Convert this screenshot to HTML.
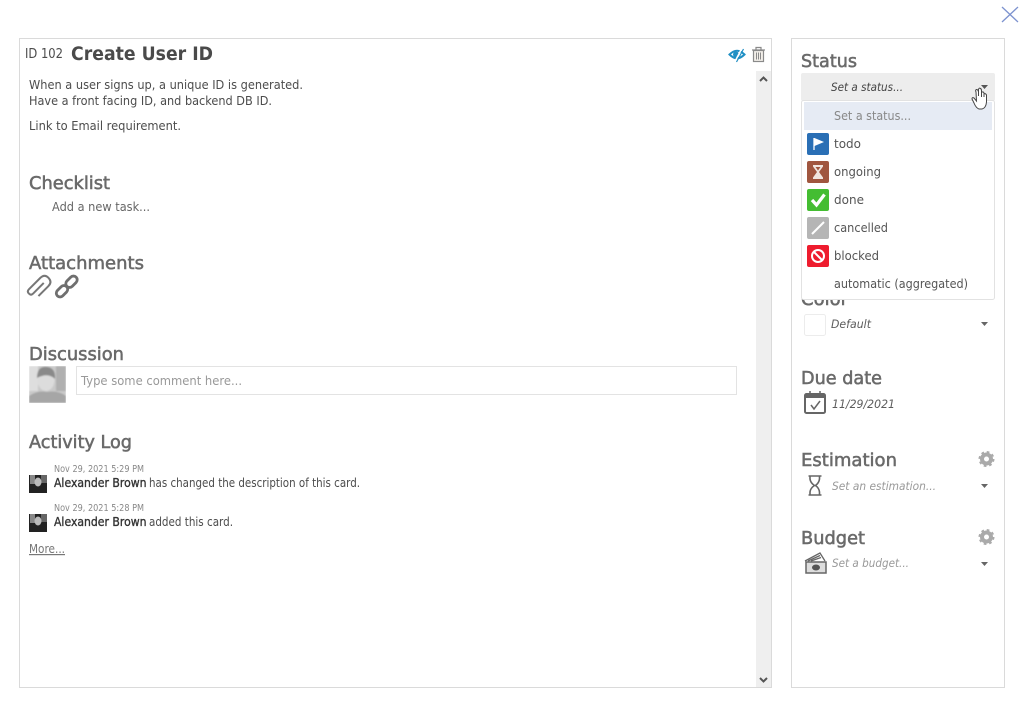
<!DOCTYPE html>
<html><head><meta charset="utf-8"><style>
html,body{margin:0;padding:0;background:#fff;width:1024px;height:707px;overflow:hidden}
svg{display:block}
text{font-family:"DejaVu Sans","Liberation Sans",sans-serif;font-size:12px;fill:#4c4c4c}
.h{font-size:18px;fill:#6a6a6a;stroke:#6a6a6a;stroke-width:.55px}
.i{font-style:italic;fill:#5c5c5c;font-size:11.500px}
.b{stroke:#333;stroke-width:.35px;fill:#333}
.l{font-size:12.500px;fill:#555}
</style></head><body>
<svg width="1024" height="707" viewBox="0 0 1024 707" xmlns="http://www.w3.org/2000/svg">
<defs><filter id="bl" x="0" y="0" width="100%" height="100%"><feGaussianBlur stdDeviation="0.800"/></filter>
<clipPath id="av"><rect x="29" y="366" width="37" height="37"/></clipPath></defs>
<path d="M1002 7L1018 22M1018 7L1002 22" stroke="#7d93cf" stroke-width="1.300" fill="none"/>
<rect x="19.500" y="38.500" width="752" height="649" fill="#fff" stroke="#dadada"/>
<rect x="791.500" y="38.500" width="213" height="649" fill="#fff" stroke="#dadada"/>
<rect x="756" y="71" width="15" height="616" fill="#efefef"/>
<path d="M760 81L763.500 77.500L767 81" stroke="#555" stroke-width="2" fill="none"/>
<path d="M760 678L763.500 681.500L767 678" stroke="#555" stroke-width="2" fill="none"/>

<text x="25" y="58" style="font-size:13px" textLength="38" lengthAdjust="spacingAndGlyphs">ID 102</text>
<text x="71" y="60" style="font-size:18.500px;font-weight:bold;fill:#4a4a4a" textLength="142" lengthAdjust="spacingAndGlyphs">Create User ID</text>
<path d="M729.500 54.500Q737 47 744.500 54.500Q737 62 729.500 54.500Z" fill="#fff" stroke="#1f8fc4" stroke-width="2"/><circle cx="736" cy="54.500" r="3" fill="#1f8fc4"/><path d="M735 61.500L742 48" stroke="#fff" stroke-width="1.500"/><path d="M736.500 62L743.500 49" stroke="#1f8fc4" stroke-width="1.200"/>
<path d="M752 50H765M756 50V47.500H761V50" stroke="#8a8a8a" stroke-width="1.200" fill="none"/><rect x="753.500" y="50.500" width="10" height="11" fill="#f3efe9" stroke="#8a8a8a" stroke-width="1.200"/><path d="M756.500 52.500V59.500M758.500 52.500V59.500M760.500 52.500V59.500" stroke="#8a8a8a" stroke-width="1" fill="none"/>

<text x="29" y="89" textLength="274" lengthAdjust="spacingAndGlyphs">When a user signs up, a unique ID is generated.</text>
<text x="29" y="105" textLength="243" lengthAdjust="spacingAndGlyphs">Have a front facing ID, and backend DB ID.</text>
<text x="29" y="130" textLength="152" lengthAdjust="spacingAndGlyphs">Link to Email requirement.</text>

<text class="h" x="29" y="189" textLength="81" lengthAdjust="spacingAndGlyphs">Checklist</text>
<text x="52" y="211" style="fill:#666" textLength="98" lengthAdjust="spacingAndGlyphs">Add a new task...</text>
<text class="h" x="29" y="269" textLength="115" lengthAdjust="spacingAndGlyphs">Attachments</text>
<g fill="none" stroke="#777" stroke-width="2" transform="rotate(-45 39.500 286.500)"><path d="M32 292.500H46Q52 292.500 52 286.500Q52 281 46 281H30Q27 281 27 284Q27 287 30 287H45"/></g>
<g fill="none" stroke="#6f6f6f" stroke-width="2.800"><rect x="55.500" y="287.500" width="13" height="7.500" rx="3.750" transform="rotate(-45 62 291.250)"/><rect x="65" y="278" width="13" height="7.500" rx="3.750" transform="rotate(-45 71.500 281.750)"/></g>

<text class="h" x="29" y="360" textLength="95" lengthAdjust="spacingAndGlyphs">Discussion</text>
<g clip-path="url(#av)"><g filter="url(#bl)">
<rect x="29" y="366" width="37" height="37" fill="#c9c9c9"/>
<rect x="29" y="366" width="9" height="25" fill="#dedede"/><rect x="56" y="366" width="10" height="25" fill="#b0b0b0"/>
<ellipse cx="46" cy="380" rx="8.500" ry="11" fill="#dcdcdc"/><path d="M37 378Q37 366 47 367Q56 368 55 379Q48 372 37 378Z" fill="#8a8a8a"/><path d="M29 403V396Q38 390 47 392Q58 390 66 396V403Z" fill="#a6a6a6"/>
</g></g>
<rect x="76.500" y="366.500" width="660" height="28" fill="#fff" stroke="#e3e3e3"/>
<text x="81" y="385" style="fill:#999" textLength="161" lengthAdjust="spacingAndGlyphs">Type some comment here...</text>

<text class="h" x="29" y="448" textLength="103" lengthAdjust="spacingAndGlyphs">Activity Log</text>
<text x="54" y="472" style="font-size:10px;fill:#888" textLength="90" lengthAdjust="spacingAndGlyphs">Nov 29, 2021 5:29 PM</text>
<rect x="29" y="475" width="18" height="18" fill="#222"/><rect x="30" y="475" width="5" height="9" fill="#888"/><rect x="41" y="475" width="6" height="8" fill="#666"/><ellipse cx="38" cy="482" rx="3.500" ry="4.500" fill="#bbb"/>
<text x="54" y="487" class="b" textLength="92.500" lengthAdjust="spacingAndGlyphs">Alexander Brown</text>
<text x="149" y="487" textLength="211" lengthAdjust="spacingAndGlyphs">has changed the description of this card.</text>
<text x="54" y="511" style="font-size:10px;fill:#888" textLength="90" lengthAdjust="spacingAndGlyphs">Nov 29, 2021 5:28 PM</text>
<rect x="29" y="514" width="18" height="18" fill="#222"/><rect x="30" y="514" width="5" height="9" fill="#888"/><rect x="41" y="514" width="6" height="8" fill="#666"/><ellipse cx="38" cy="521" rx="3.500" ry="4.500" fill="#bbb"/>
<text x="54" y="526" class="b" textLength="92.500" lengthAdjust="spacingAndGlyphs">Alexander Brown</text>
<text x="149" y="526" textLength="84" lengthAdjust="spacingAndGlyphs">added this card.</text>
<text x="29" y="553" style="fill:#777;text-decoration:underline" textLength="36" lengthAdjust="spacingAndGlyphs">More...</text>

<text class="h" x="801" y="67" textLength="56" lengthAdjust="spacingAndGlyphs">Status</text>
<rect x="801" y="73" width="194" height="28" rx="2" fill="#ededed"/>
<text x="831" y="91" class="i" style="fill:#444" textLength="72" lengthAdjust="spacingAndGlyphs">Set a status...</text>
<path d="M981 85H988L984.500 89Z" fill="#555"/>

<text class="h" x="801" y="305" textLength="47" lengthAdjust="spacingAndGlyphs">Color</text>
<rect x="801.500" y="100.500" width="193" height="199" rx="2" fill="#fff" stroke="#e2e2e2"/>
<rect x="804" y="102" width="188" height="28" fill="#e6ebf4"/>
<text x="834" y="120" style="fill:#888" textLength="77" lengthAdjust="spacingAndGlyphs">Set a status...</text>

<rect x="807" y="133" width="22" height="22" rx="2" fill="#2a6fb5"/><path d="M814 138V150" stroke="#fff" stroke-width="1.300"/><path d="M814.500 138L824 142L814.500 146Z" fill="#fff"/>
<text x="834" y="148" class="l" textLength="27" lengthAdjust="spacingAndGlyphs">todo</text>
<rect x="807" y="161" width="22" height="22" rx="2" fill="#a0563f"/><path d="M813 165H823V166.500L819 172L823 177.500V179H813V177.500L817 172L813 166.500Z" fill="#f0e6e0"/><path d="M815.500 167H820.500L818 170.500Z" fill="#a0563f"/>
<text x="834" y="176" class="l" textLength="47" lengthAdjust="spacingAndGlyphs">ongoing</text>
<rect x="807" y="189" width="22" height="22" rx="2" fill="#44bd32"/><path d="M812 200L816.500 205L824.500 194.500" stroke="#fff" stroke-width="3.200" fill="none"/>
<text x="834" y="204" class="l" textLength="30" lengthAdjust="spacingAndGlyphs">done</text>
<rect x="807" y="217" width="22" height="22" rx="2" fill="#b5b5b5"/><path d="M812 234L824 222" stroke="#fff" stroke-width="2"/>
<text x="834" y="232" class="l" textLength="54" lengthAdjust="spacingAndGlyphs">cancelled</text>
<rect x="807" y="245" width="22" height="22" rx="2" fill="#ee1c2e"/><circle cx="818" cy="256" r="6" fill="none" stroke="#fff" stroke-width="2"/><path d="M814 252L822 260" stroke="#fff" stroke-width="2"/>
<text x="834" y="260" class="l" textLength="45" lengthAdjust="spacingAndGlyphs">blocked</text>
<text x="834" y="288" class="l" textLength="134" lengthAdjust="spacingAndGlyphs">automatic (aggregated)</text>

<path d="M976 92Q975 90 976.500 89.500Q978 89.500 978.500 92V96V89.500Q979 87.500 980.500 88.500Q981.500 89 981.500 91V97V92.500Q983 91 984 93V97V94Q985.500 93 986.500 95V102Q986 108 982 109H979Q976 108 974 103L972 99Q972 97 974 98L976.500 101Z" fill="#fff" stroke="#444" stroke-width="1"/>

<rect x="804.500" y="314.500" width="21" height="21" rx="2" fill="#fff" stroke="#ececec"/>
<text x="831" y="328" class="i" textLength="40" lengthAdjust="spacingAndGlyphs">Default</text>
<path d="M981 322H988L984.500 326Z" fill="#666"/>

<text class="h" x="801" y="384" textLength="81" lengthAdjust="spacingAndGlyphs">Due date</text>
<rect x="805" y="394" width="20" height="19" rx="1.500" fill="#fff" stroke="#666" stroke-width="2"/><rect x="805" y="394" width="20" height="4" fill="#666"/><path d="M810 391V396M820 391V396" stroke="#666" stroke-width="1.500"/><path d="M811 405L814 409L820 401" stroke="#666" stroke-width="1.500" fill="none"/>
<text x="832" y="408" class="i" textLength="63" lengthAdjust="spacingAndGlyphs">11/29/2021</text>

<text class="h" x="801" y="466" textLength="96" lengthAdjust="spacingAndGlyphs">Estimation</text>
<circle cx="986.500" cy="459" r="4.500" fill="none" stroke="#aaa" stroke-width="4"/><circle cx="986.500" cy="459" r="7" fill="none" stroke="#aaa" stroke-width="2" stroke-dasharray="2.700 2.800"/>
<path d="M808.500 476H821.500M808.500 495H821.500M810 476V479Q810.500 483 814.500 485.500Q810.500 488 810 492V495M819.500 476V479Q819 483 815.500 485.500Q819 488 819.500 492V495" stroke="#666" stroke-width="1.600" fill="none"/>
<text x="832" y="490" class="i" style="fill:#999" textLength="104" lengthAdjust="spacingAndGlyphs">Set an estimation...</text>
<path d="M981 484H988L984.500 488Z" fill="#666"/>

<text class="h" x="801" y="544" textLength="64" lengthAdjust="spacingAndGlyphs">Budget</text>
<circle cx="986.500" cy="537" r="4.500" fill="none" stroke="#aaa" stroke-width="4"/><circle cx="986.500" cy="537" r="7" fill="none" stroke="#aaa" stroke-width="2" stroke-dasharray="2.700 2.800"/>
<path d="M805 561L820 553L825 561M808 561L820 555.500M811 561L821 557.500" stroke="#666" stroke-width="1.300" fill="none"/>
<rect x="806" y="562" width="20" height="11" fill="#ddd" stroke="#666" stroke-width="1.500"/><ellipse cx="816" cy="567.500" rx="4" ry="3" fill="#555"/>
<text x="832" y="567" class="i" style="fill:#999" textLength="77" lengthAdjust="spacingAndGlyphs">Set a budget...</text>
<path d="M981 562H988L984.500 566Z" fill="#666"/>
</svg>
</body></html>
